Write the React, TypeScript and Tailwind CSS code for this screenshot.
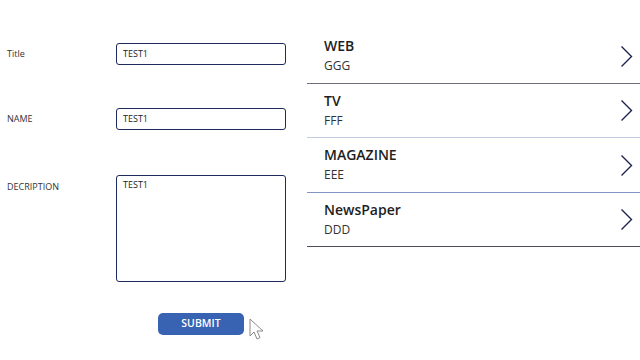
import React from "react";

const font = { fontFamily: '"Open Sans", "Noto Sans", sans-serif' };

const rows = [
  { t: "WEB", s: "GGG", h: "h-[54px]", b: "border-[#6e6e7c]" },
  { t: "TV", s: "FFF", h: "h-[53px]", b: "border-[#c3cbe3]" },
  { t: "MAGAZINE", s: "EEE", h: "h-[54px]", b: "border-[#8494c4]" },
  { t: "NewsPaper", s: "DDD", h: "h-[53px]", b: "border-[#4c4c5a]" },
];

function Chevron() {
  return (
    <svg width="13" height="23" viewBox="0 0 13 23" fill="none">
      <path d="M1.5 1.5 L11.5 11.5 L1.5 21.5" stroke="#1c2250" strokeWidth="1.4" />
    </svg>
  );
}

function Cursor() {
  return (
    <svg width="16" height="23" viewBox="0 0 16 23" fill="none">
      <path
        d="M1 1 L1 18 L5 14 L8 21 L11 19.5 L8 13 L14 13 Z"
        fill="#ffffff"
        stroke="#8a8a8a"
        strokeWidth="1"
        strokeLinejoin="round"
      />
    </svg>
  );
}

export default function App() {
  return (
    <div className="w-[640px] h-[360px] bg-white flex overflow-hidden text-[#222]" style={font}>
      <div className="w-[307px] flex flex-col pt-[43px]">
        <div className="flex items-center h-[22px]">
          <div className="w-[116px] pl-[7px] text-[9px] text-[#333]">Title</div>
          <div className="w-[170px] h-[22px] border border-[#1e2a5e] rounded-[3px] flex items-center pl-[6px] text-[9px]">TEST1</div>
        </div>
        <div className="flex items-center h-[22px] mt-[43px]">
          <div className="w-[116px] pl-[7px] text-[9px] text-[#333]">NAME</div>
          <div className="w-[170px] h-[22px] border border-[#1e2a5e] rounded-[3px] flex items-center pl-[6px] text-[9px]">TEST1</div>
        </div>
        <div className="flex items-start mt-[45px]">
          <div className="w-[116px] pl-[7px] pt-[5px] text-[9px] text-[#333]">DECRIPTION</div>
          <div className="w-[170px] h-[107px] border border-[#1e2a5e] rounded-[3px] pl-[6px] pt-[2px] text-[9px]">TEST1</div>
        </div>
        <div className="flex items-start mt-[31px] pl-[158px]">
          <div className="w-[86px] h-[22px] bg-[#3862b2] rounded-[5px] flex items-center justify-center text-white text-[10.5px] font-semibold">SUBMIT</div>
          <div className="ml-[5px] mt-[5px]">
            <Cursor />
          </div>
        </div>
      </div>
      <div className="flex-1 flex flex-col pt-[29px]">
        {rows.map((r) => (
          <div key={r.t} className={`${r.h} border-b ${r.b} box-content flex items-center justify-between pl-[17px] pr-[7px]`}>
            <div className="flex flex-col self-start pt-[7px]">
              <div className="text-[14px] leading-[20px] font-semibold text-[#1e1e1e]">{r.t}</div>
              <div className="text-[12px] leading-[20px] text-[#333]">{r.s}</div>
            </div>
            <Chevron />
          </div>
        ))}
      </div>
    </div>
  );
}
